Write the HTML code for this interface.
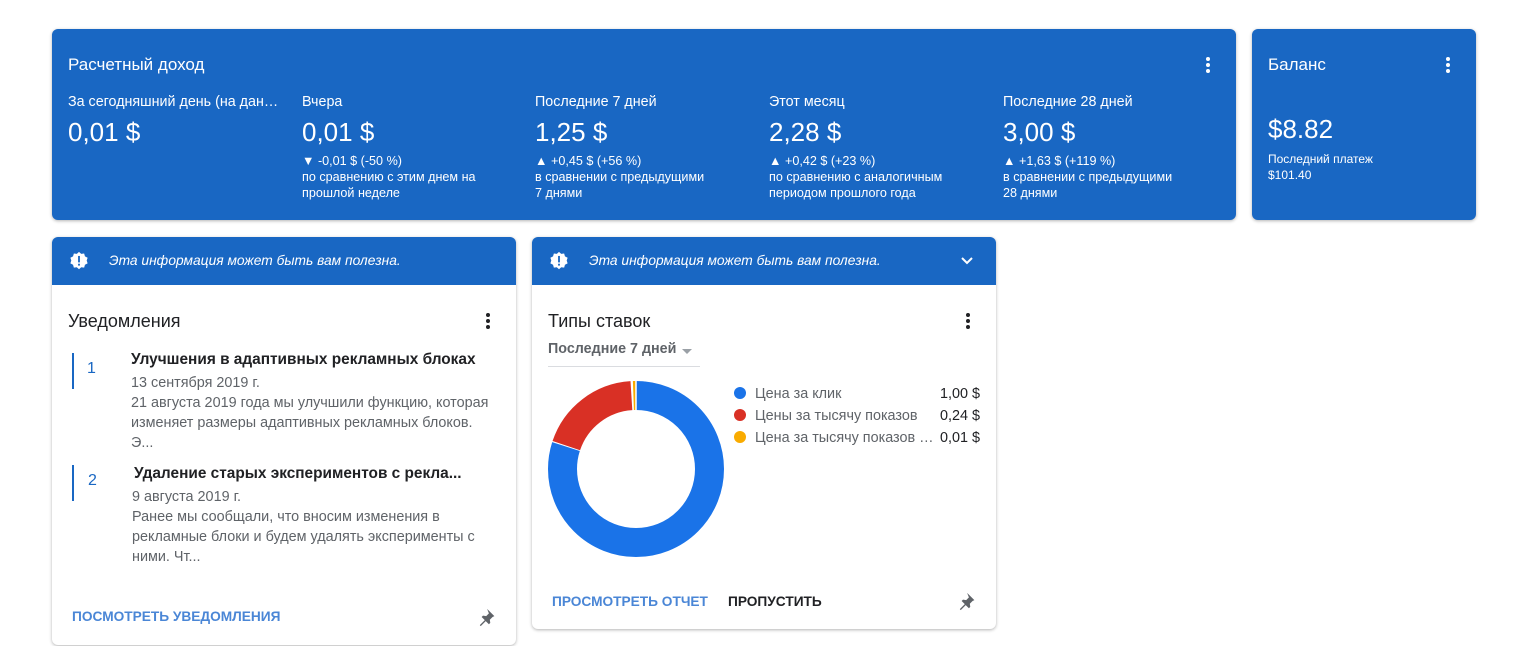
<!DOCTYPE html>
<html><head><meta charset="utf-8"><style>
*{margin:0;padding:0;box-sizing:border-box}
body{width:1533px;height:646px;background:#fff;font-family:"Liberation Sans",Arial,sans-serif;position:relative;overflow:hidden}
.abs{position:absolute}
.blue{background:#1967c3;border-radius:6px;color:#fff;box-shadow:0 1px 3px rgba(0,0,0,.3)}
.dots{position:absolute;width:4px}
.dots i{display:block;width:4px;height:4px;border-radius:50%;margin-bottom:2px}
.col{position:absolute;top:65px;width:225px}
.col .l{font-size:14.3px;white-space:nowrap;overflow:hidden;text-overflow:ellipsis}
.col .v{font-size:26px;margin-top:7px;height:30px}
.col .d{font-size:12.6px;line-height:16px;margin-top:6px}
.card{background:#fff;border-radius:6px;box-shadow:0 1px 3px rgba(0,0,0,.3);overflow:hidden}
.band{height:48px;background:#1967c3;color:#fff;font-style:italic;font-size:13.8px;line-height:48px;padding-left:57px;position:relative}
.gray{color:#5f6368}
</style></head><body>
<div class="abs blue" style="left:52px;top:29px;width:1184px;height:191px">
 <div class="abs" style="left:16px;top:26px;font-size:17px">Расчетный доход</div>
 <div class="dots" style="left:1154px;top:28px"><i style="background:#fff"></i><i style="background:#fff"></i><i style="background:#fff"></i></div>
 <div class="col" style="left:16px;width:218px"><div class="l">За сегодняшний день (на данный момент)</div><div class="v">0,01 $</div></div>
 <div class="col" style="left:250px"><div class="l">Вчера</div><div class="v">0,01 $</div><div class="d">▼ -0,01 $ (-50 %)<br>по сравнению с этим днем на<br>прошлой неделе</div></div>
 <div class="col" style="left:483px"><div class="l">Последние 7 дней</div><div class="v">1,25 $</div><div class="d">▲ +0,45 $ (+56 %)<br>в сравнении с предыдущими<br>7 днями</div></div>
 <div class="col" style="left:717px"><div class="l">Этот месяц</div><div class="v">2,28 $</div><div class="d">▲ +0,42 $ (+23 %)<br>по сравнению с аналогичным<br>периодом прошлого года</div></div>
 <div class="col" style="left:951px"><div class="l">Последние 28 дней</div><div class="v">3,00 $</div><div class="d">▲ +1,63 $ (+119 %)<br>в сравнении с предыдущими<br>28 днями</div></div>
</div>
<div class="abs blue" style="left:1252px;top:29px;width:224px;height:191px">
 <div class="abs" style="left:16px;top:26px;font-size:17px">Баланс</div>
 <div class="dots" style="left:194px;top:28px"><i style="background:#fff"></i><i style="background:#fff"></i><i style="background:#fff"></i></div>
 <div class="abs" style="left:16px;top:85px;font-size:26px">$8.82</div>
 <div class="abs" style="left:16px;top:122px;font-size:12px;line-height:16px">Последний платеж<br>$101.40</div>
</div>

<svg width="0" height="0" style="position:absolute"><defs><g id="bad"><path d="M12 1l2.4 2.2 3.2-.4.9 3.1 2.9 1.5-1 3.1 1 3.1-2.9 1.5-.9 3.1-3.2-.4L12 20l-2.4-2.2-3.2.4-.9-3.1L2.6 13.6l1-3.1-1-3.1 2.9-1.5.9-3.1 3.2.4z" fill="#fff"/><rect x="11" y="5.5" width="2" height="7" fill="#1967c3"/><rect x="11" y="14" width="2" height="2" fill="#1967c3"/></g>
<g id="pin"><path d="M10 2l8 8-2 1-3 3 .5 3.5-1.5 1.5-3.5-3.5L3 21l-1-1 5.5-5.5L4 11l1.5-1.5L9 10l3-3z" fill="#5f6368"/></g></defs></svg>

<div class="abs card" style="left:52px;top:237px;width:464px;height:408px">
 <div class="band"><svg class="abs" style="left:16px;top:13px" width="22" height="22" viewBox="0 0 24 22"><use href="#bad"/></svg>Эта информация может быть вам полезна.</div>
 <div class="abs" style="left:16px;top:74px;font-size:18px;color:#202124">Уведомления</div>
 <div class="dots" style="left:434px;top:76px"><i style="background:#202124"></i><i style="background:#202124"></i><i style="background:#202124"></i></div>
 <div class="abs" style="left:20px;top:116px;width:2px;height:36px;background:#1967c3"></div>
 <div class="abs" style="left:35px;top:123px;font-size:16px;color:#1967c3">1</div>
 <div class="abs" style="left:79px;top:114px;font-size:15.4px;font-weight:bold;color:#202124;white-space:nowrap">Улучшения в адаптивных рекламных блоках</div>
 <div class="abs gray" style="left:79px;top:136px;font-size:14.4px;line-height:20px;width:360px">13 сентября 2019 г.<br>21 августа 2019 года мы улучшили функцию, которая изменяет размеры адаптивных рекламных блоков.<br>Э...</div>
 <div class="abs" style="left:20px;top:228px;width:2px;height:36px;background:#1967c3"></div>
 <div class="abs" style="left:36px;top:235px;font-size:16px;color:#1967c3">2</div>
 <div class="abs" style="left:82px;top:228px;font-size:15.4px;font-weight:bold;color:#202124;white-space:nowrap">Удаление старых экспериментов с рекла...</div>
 <div class="abs gray" style="left:80px;top:250px;font-size:14.4px;line-height:20px;width:368px">9 августа 2019 г.<br>Ранее мы сообщали, что вносим изменения в рекламные блоки и будем удалять эксперименты с ними. Чт...</div>
 <div class="abs" style="left:20px;top:372px;font-size:13.7px;font-weight:bold;color:#4a86d6">ПОСМОТРЕТЬ УВЕДОМЛЕНИЯ</div>
 <svg class="abs" style="left:426px;top:370px" width="20" height="20" viewBox="0 0 22 22"><use href="#pin"/></svg>
</div>

<div class="abs card" style="left:532px;top:237px;width:464px;height:392px">
 <div class="band"><svg class="abs" style="left:16px;top:13px" width="22" height="22" viewBox="0 0 24 22"><use href="#bad"/></svg>Эта информация может быть вам полезна.
  <svg class="abs" style="left:428px;top:19px" width="14" height="10" viewBox="0 0 14 10"><path d="M2 2l5 5 5-5" stroke="#fff" stroke-width="2" fill="none"/></svg></div>
 <div class="abs" style="left:16px;top:74px;font-size:18px;color:#202124">Типы ставок</div>
 <div class="dots" style="left:434px;top:76px"><i style="background:#202124"></i><i style="background:#202124"></i><i style="background:#202124"></i></div>
 <div class="abs gray" style="left:16px;top:104px;font-size:14.3px;font-weight:bold">Последние 7 дней</div>
 <div class="abs" style="left:150px;top:112px;border:5px solid transparent;border-top-color:#9aa0a6;border-bottom:0"></div>
 <div class="abs" style="left:16px;top:129px;width:152px;height:1px;background:#dadce0"></div>
 <svg class="abs" style="left:15px;top:143px" width="178" height="178" viewBox="0 0 178 178">
  <g transform="translate(89,89) rotate(-90)">
   <circle r="73.5" fill="none" stroke="#1a73e8" stroke-width="29" stroke-dasharray="369 1000"/>
   <circle r="73.5" fill="none" stroke="#d93025" stroke-width="29" stroke-dasharray="0 370 87 1000"/>
   <circle r="73.5" fill="none" stroke="#f9ab00" stroke-width="29" stroke-dasharray="0 459 3 1000"/>
   <line x1="0" y1="0" x2="90" y2="0" stroke="#fff" stroke-width="1.5"/>
  </g>
 </svg>
 <div class="abs gray" style="left:202px;top:146px;font-size:14.4px;line-height:22px;width:246px">
  <div style="white-space:nowrap"><span style="display:inline-block;width:12px;height:12px;border-radius:50%;background:#1a73e8;vertical-align:-1px;margin-right:9px"></span>Цена за клик<span style="float:right;color:#202124">1,00 $</span></div>
  <div style="white-space:nowrap"><span style="display:inline-block;width:12px;height:12px;border-radius:50%;background:#d93025;vertical-align:-1px;margin-right:9px"></span>Цены за тысячу показов<span style="float:right;color:#202124">0,24 $</span></div>
  <div style="white-space:nowrap"><span style="display:inline-block;width:12px;height:12px;border-radius:50%;background:#f9ab00;vertical-align:-1px;margin-right:9px"></span>Цена за тысячу показов …<span style="float:right;color:#202124">0,01 $</span></div>
 </div>
 <div class="abs" style="left:20px;top:357px;font-size:13.7px;font-weight:bold;color:#4a86d6">ПРОСМОТРЕТЬ ОТЧЕТ</div>
 <div class="abs" style="left:196px;top:357px;font-size:13.7px;font-weight:bold;color:#202124">ПРОПУСТИТЬ</div>
 <svg class="abs" style="left:426px;top:354px" width="20" height="20" viewBox="0 0 22 22"><use href="#pin"/></svg>
</div>
</body></html>
